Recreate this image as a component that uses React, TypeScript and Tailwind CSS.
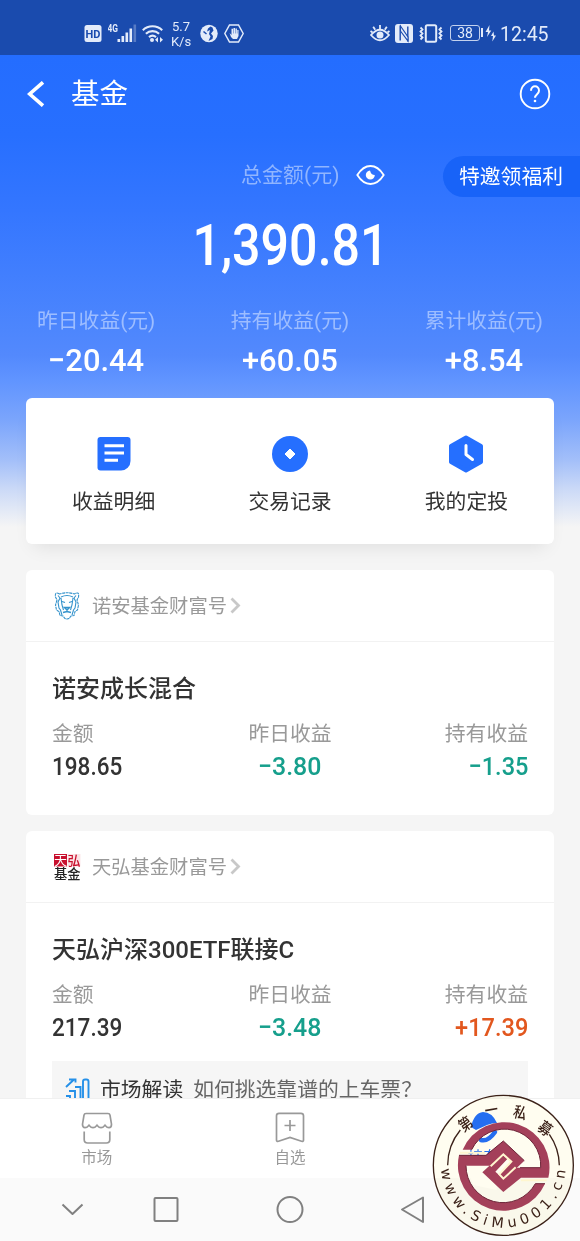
import type { ReactNode } from 'react';

interface Stat {
  label: string;
  value: string;
  tone?: string;
}

interface FundCardProps {
  logo: ReactNode;
  publisher: string;
  name: string;
  stats: Stat[];
  children?: ReactNode;
}

const CJK = "font-['Roboto','Noto_Sans_CJK_SC',sans-serif]";

const summary: Stat[] = [
  { label: '昨日收益(元)', value: '−20.44' },
  { label: '持有收益(元)', value: '+60.05' },
  { label: '累计收益(元)', value: '+8.54' },
];

function StatusBar() {
  return (
    <div className="flex h-[55px] shrink-0 items-end bg-[#1a4bae] pb-[9px] text-[#e3ebfa]">
      <svg className="ml-[84px] mb-[3px]" width="18" height="19" viewBox="0 0 18 19">
        <rect x="0.5" y="1" width="17" height="17" rx="2.5" fill="currentColor" />
        <text x="9" y="13.5" textAnchor="middle" fontSize="11" fontWeight="700" fontFamily="Roboto" fill="#1a4bae">HD</text>
      </svg>
      <svg className="ml-[6px] mb-[3px]" width="29" height="20" viewBox="0 0 29 20">
        <text x="-0.5" y="9" fontSize="10" fontWeight="700" fontFamily="Roboto" textLength="10.5" lengthAdjust="spacingAndGlyphs" fill="currentColor">4G</text>
        <g fill="currentColor">
          <rect x="9.5" y="16" width="2.6" height="3" />
          <rect x="13.5" y="13" width="2.6" height="6" />
          <rect x="17.5" y="9.5" width="2.6" height="9.5" />
          <rect x="21.5" y="5.5" width="2.6" height="13.5" />
          <rect x="25.5" y="1.5" width="2.6" height="17.5" opacity="0.3" />
        </g>
      </svg>
      <svg className="ml-[5px] mb-[3px]" width="22" height="20" viewBox="0 0 22 20">
        <g fill="none" stroke="currentColor" strokeWidth="2.1">
          <path d="M0.8 7.2a14 14 0 0 1 19.4 0" />
          <path d="M3.9 10.8a9.6 9.6 0 0 1 13.2 0" />
          <path d="M7 14.1a5.4 5.4 0 0 1 7 0" />
        </g>
        <circle cx="10" cy="17" r="2" fill="currentColor" />
        <path d="M13 16.8l3-2.7v5.4zM21 16.8l-3-2.7v5.4z" fill="currentColor" />
      </svg>
      <div className="ml-[6px] mb-[-3px] w-[22px] text-center text-[13px] leading-[15px]">
        <div>5.7</div>
        <div>K/s</div>
      </div>
      <svg className="ml-[8px] mb-[3px]" width="18" height="19" viewBox="0 0 18 19">
        <circle cx="9" cy="9.5" r="8.7" fill="currentColor" />
        <path d="M10.500 2.500L8 4.500l-1 3 3-1.500-1 4 1.500 2.500-2 4.500 4-2 .5-3-2-2.500 2.500-3-1-3z" fill="#1a4bae" />
        <path d="M3.500 7.500l3 2.500" stroke="#1a4bae" strokeWidth="1.500" />
      </svg>
      <svg className="ml-[6px] mb-[3px]" width="20" height="19" viewBox="0 0 20 19">
        <path d="M5.500 1h9l4.700 8.500-4.700 8.500h-9L0.800 9.500z" fill="none" stroke="currentColor" strokeWidth="1.500" />
        <path d="M5.500 9l1.500 4 2 2h4l1.500-3V6h-1.200v3.500h-.4V4.600h-1.500v4.900h-.4V4h-1.500v5.500h-.4V4.800H7.500V11z" fill="currentColor" />
      </svg>

      <svg className="ml-[126px] mb-[4px]" width="20" height="18" viewBox="0 0 20 18">
        <g fill="none" stroke="currentColor" strokeWidth="1.800">
          <path d="M1 11q9-10.500 18 0-9 10.500-18 0z" />
          <path d="M10 1v4M3.200 2.800l2 3M16.800 2.800l-2 3M0.500 7l2 1.500M19.500 7l-2 1.500" />
        </g>
        <circle cx="10" cy="11" r="3.500" fill="currentColor" />
      </svg>
      <svg className="ml-[5px] mb-[3px]" width="18" height="19" viewBox="0 0 18 19">
        <rect width="18" height="19" rx="3" fill="currentColor" />
        <path d="M5.200 1.500v15M12.800 2.500v15" stroke="#1a4bae" strokeWidth="1.400" />
        <path d="M5.500 2l7.500 11v4L5.500 7z" fill="currentColor" stroke="#1a4bae" strokeWidth="1.100" />
      </svg>
      <svg className="ml-[6px] mb-[3px]" width="24" height="19" viewBox="0 0 24 19">
        <rect x="6.800" y="1.200" width="10.400" height="16.500" rx="1.500" fill="none" stroke="currentColor" strokeWidth="2" />
        <path d="M1.500 3.500l2 2-2 2 2 2-2 2 2 2-2 2M22.500 3.500l-2 2 2 2-2 2 2 2-2 2 2 2" fill="none" stroke="currentColor" strokeWidth="1.800" />
      </svg>
      <div className="ml-[7px] mb-[5px] h-[16px] w-[30px] rounded-[3px] border border-[#c3d1ee] text-center text-[14px] leading-[14px]">38</div>
      <div className="ml-[1px] mb-[9px] h-[9px] w-[2px] bg-current" />
      <svg className="ml-[2px] mb-[4px]" width="11" height="17" viewBox="0 0 11 17">
        <path d="M4.500 0L0.500 7h2.500l-1 5 4.300-6.500H4zM8.500 6.500L6 11h2l-.7 5.500L11 10.500H9z" fill="currentColor" />
      </svg>
      <div className="ml-[4px] text-[19.500px] leading-[23px]">12:45</div>
    </div>
  );
}

function Header() {
  return (
    <header className="text-white">
      <div className="flex h-[77px] items-center pl-[27px] pr-[29px]">
        <svg width="18" height="26" viewBox="0 0 18 26" fill="none" stroke="currentColor" strokeWidth="3.600">
          <path d="M16 1.300L2.700 13l13.300 11.700" />
        </svg>
        <h1 className="ml-[26px] pt-[3px] text-[28.500px] leading-none">基金</h1>
        <svg className="ml-auto" width="32" height="32" viewBox="0 0 32 32">
          <circle cx="16" cy="16" r="14.300" fill="none" stroke="currentColor" strokeWidth="1.900" />
          <path d="M12 12.800c0-6 8-6 8 0 0 3.300-4 3.400-4 7" fill="none" stroke="currentColor" strokeWidth="2" />
          <circle cx="16" cy="23" r="1.300" fill="currentColor" />
        </svg>
      </div>

      <div className="mt-[24px] flex h-[41px] items-center pl-[241px]">
        <span className="mb-[2px] text-[21px] leading-none text-[#90b5ff]">总金额(元)</span>
        <svg className="ml-auto mb-[3px]" width="29" height="22" viewBox="0 0 29 22">
          <path d="M1.300 11Q7 2 14.500 2T27.700 11Q22 20 14.500 20T1.300 11z" fill="none" stroke="currentColor" strokeWidth="1.800" />
          <path d="M14 6.500a4.500 4.500 0 1 0 4.800 4.500q-3.800 0-4.800-4.500z" fill="currentColor" />
        </svg>
        <div className="ml-[58px] flex h-full w-[137px] items-center rounded-l-full bg-[#1863f8] pt-[2px] pl-4 text-[20.800px]">特邀领福利</div>
      </div>

      <div className="mt-[14px] flex h-[68px] items-center justify-center">
        <span className="scale-x-[0.88] text-[57px] font-medium leading-none">1,390.81</span>
      </div>

      <div className="mt-[27px] flex justify-between px-[37px]">
        {summary.map((s) => (
          <div key={s.label} className="flex flex-col items-center">
            <span className="text-[20.800px] leading-[30px] text-[#9dbdff]">{s.label}</span>
            <span className="mt-[5px] scale-x-[0.98] text-[31.500px] font-medium leading-[40px]">{s.value}</span>
          </div>
        ))}
      </div>
    </header>
  );
}

function QuickLinks() {
  return (
    <div className="mx-[26px] mt-[17px] flex h-[146px] justify-between rounded-md bg-white px-[46px] pt-[36px] text-[20.800px] text-[#333] shadow-[0_10px_18px_-8px_rgba(0,0,0,0.1)]">
      <div className="flex flex-col items-center">
        <svg width="40" height="40" viewBox="0 0 40 40">
          <path d="M6.500 3h27a3 3 0 0 1 3 3v21a9.500 9.500 0 0 1-9.500 9.500H6.500a3 3 0 0 1-3-3V6a3 3 0 0 1 3-3z" fill="#256fff" />
          <path d="M10.500 11.800h19.500M10.500 19h19.500M10.500 26.200h13.500" stroke="#fff" strokeWidth="3" />
        </svg>
        <span className="mt-[11px] leading-[34px]">收益明细</span>
      </div>
      <div className="flex flex-col items-center">
        <svg width="40" height="40" viewBox="0 0 40 40">
          <circle cx="20" cy="20" r="18" fill="#256fff" />
          <path d="M20 15l5 5-5 5-5-5z" fill="#fff" stroke="#fff" strokeLinejoin="round" />
        </svg>
        <span className="mt-[11px] leading-[34px]">交易记录</span>
      </div>
      <div className="flex flex-col items-center">
        <svg width="40" height="40" viewBox="0 0 40 40">
          <path d="M20 3.500l15 8.500v16l-15 8.500-15-8.500V12z" fill="#256fff" stroke="#256fff" strokeWidth="4" strokeLinejoin="round" />
          <path d="M20 11.500V20.500l6.500 5" fill="none" stroke="#fff" strokeWidth="3" strokeLinecap="round" strokeLinejoin="round" />
        </svg>
        <span className="mt-[11px] leading-[34px]">我的定投</span>
      </div>
    </div>
  );
}

function LionLogo() {
  return (
    <svg width="28" height="30" viewBox="0 0 28 30" fill="none" stroke="#3593cc" strokeWidth="1.100">
      <path d="M6.500 3Q1.500 0 2.500 6l1.500 3-1.500 5 1 5 2.500 1.500 1 4 3 .5 2 2.500 2 .5 2-.5 2-2.500 3-.5 1-4 2.500-1.500 1-5L24 9l1.500-3q1-6-4-3-7.500-2.500-15 0z" strokeDasharray="3 .6" />
      <path d="M5 4.500l2 2.500-2 4 1 6 1.500 2 1.500 5M23 4.500l-2 2.500 2 4-1 6-1.500 2-1.500 5M8 6q6-3 12 0M8 7l1 7 1.500 5M20 7l-1 7-1.500 5" />
      <path d="M9 10.500l3 1M19 10.500l-3 1" strokeWidth="1.300" />
      <path d="M11.500 16.500h5l-2.500 2.500zM14 18.500v2.500M10 21.500l4-1 4 1" strokeWidth="1.500" />
    </svg>
  );
}

function TianhongLogo() {
  return (
    <svg className="overflow-visible" width="28" height="28" viewBox="0 0 28 28" fontSize="13" fontFamily="Noto Sans CJK SC">
      <rect x="1" y="1" width="13" height="12.500" fill="#c8102e" />
      <rect x="14.600" y="1" width="12.800" height="12.500" fill="#fbe3e5" />
      <text x="1" y="12.200" fill="#fff">天</text>
      <text x="14.400" y="12.200" fill="#c8102e" fontWeight="500">弘</text>
      <text x="1" y="26" fill="#222" fontSize="13.300" fontWeight="500">基金</text>
    </svg>
  );
}

const columns = [
  { cell: 'items-start', value: 'origin-left scale-x-[0.85]' },
  { cell: 'items-center', value: 'scale-x-[0.94]' },
  { cell: 'items-end', value: 'origin-right scale-x-[0.89]' },
];

function FundCard({ logo, publisher, name, stats, children }: FundCardProps) {
  return (
    <section className="mx-[26px] rounded-md bg-white">
      <div className="flex h-[72px] items-center border-b border-[#f2f2f2] pl-[27px]">
        {logo}
        <span className="ml-[11px] pt-[2px] text-[19.300px] leading-none text-[#999]">{publisher}</span>
        <svg className="ml-[3px]" width="11" height="17" viewBox="0 0 11 17" fill="none" stroke="#c8c8c8" strokeWidth="2.800">
          <path d="M1.500 1.500l7 7-7 7" />
        </svg>
      </div>
      <div className="px-[26px] pt-[29px]">
        <h2 className="text-[24px] font-medium leading-[36px] text-[#333]">{name}</h2>
        <div className="mt-[12px] grid grid-cols-3">
          {stats.map((s, i) => (
            <div key={s.label} className={`flex flex-col ${columns[i].cell}`}>
              <span className="text-[20.800px] leading-[30px] text-[#999]">{s.label}</span>
              <span className={`text-[26.500px] font-medium leading-[34px] ${columns[i].value} ${s.tone ?? 'text-[#333]'}`}>
                {s.value}
              </span>
            </div>
          ))}
        </div>
        {children}
      </div>
    </section>
  );
}

function TabBar() {
  return (
    <div className="grid h-[80px] shrink-0 grid-cols-3 border-t border-[#f0f0f0] bg-white text-[15.500px] text-[#999]">
      <div className="flex flex-col items-center pt-[12px]">
        <svg width="32" height="34" viewBox="0 0 32 34" fill="none" stroke="currentColor" strokeWidth="1.700">
          <path d="M5 2.500h22q1.700 0 2 1.700l1.500 9q0 3.500-2.500 3.500-2 0-4-2.500-2 2.500-4 2.500t-4-2.500q-2 2.500-4 2.500t-4-2.500q-2 2.500-4 2.500-2.500 0-2.500-3.500L3 4.200q.3-1.700 2-1.700z" />
          <path d="M3.200 20.500v8q0 3.500 3.500 3.500h18.600q3.500 0 3.500-3.500v-8" />
        </svg>
        <span className="leading-[26px]">市场</span>
      </div>
      <div className="flex flex-col items-center pt-[12px]">
        <svg width="32" height="34" viewBox="0 0 32 34" fill="none" stroke="currentColor" strokeWidth="1.700">
          <path d="M5 2.300h22q2.500 0 2.500 2.500v24.500q0 1.500-2 1L16 26.500 4.500 30.300q-2 .5-2-1V4.800q0-2.500 2.500-2.500z" />
          <path d="M10.500 14.500h11M16 9v11" />
        </svg>
        <span className="leading-[26px]">自选</span>
      </div>
      <div className="flex flex-col items-center pt-[12px] text-[#256fff]">
        <svg width="32" height="34" viewBox="0 0 32 34">
          <path d="M4 16Q7 2 16 1q9 0 14 11-5 0-10 2L9 19z" fill="currentColor" />
          <path d="M14 29q7 2 14-8" fill="none" stroke="currentColor" strokeWidth="4.500" strokeLinecap="round" />
        </svg>
        <span className="leading-[26px]">持有</span>
      </div>
    </div>
  );
}

function SystemNav() {
  return (
    <div className="flex h-[63px] shrink-0 items-center bg-[#fafafa] pl-[61px]">
      <svg width="380" height="30" viewBox="0 0 380 30" fill="none" stroke="#808080" strokeWidth="2" strokeLinejoin="round">
        <path d="M1.500 9.500l10 9.500 10-9.500" />
        <rect x="93.500" y="3" width="23" height="23" rx="1" />
        <circle cx="229" cy="14.500" r="12.500" />
        <path d="M362 2.500v24.500L341 14.500z" />
      </svg>
    </div>
  );
}

// Round stamp that floats over the bottom right corner, tinting the tab below it
function Stamp() {
  return (
    <>
      <div className="absolute bottom-[6px] right-[7px] size-[140px] rounded-full bg-[#fffdf0] mix-blend-multiply" />
      <svg className="absolute bottom-0 right-0" width="160" height="156" viewBox="0 0 480 468">
        <defs>
          <path id="stamp-url" d="M63 241a187 187 0 0 0 374 0" />
        </defs>
        <circle cx="250" cy="241" r="210" fill="none" stroke="#3b2118" strokeWidth="4" />
        <path d="M83 241a167 167 0 0 1 38-106M388 148a167 167 0 0 1 30 93" fill="none" stroke="#3b2118" strokeWidth="4" />
        <path d="M138 243H230V315L160 300z" fill="#fffdf0" />
        <g fill="#a4405a">
          <path d="M128 194A135.700 135.700 0 0 1 385 278H303L250 321 187 262 246 208 262 222 226 260 250 281 287 248H362A109 109 0 0 0 155 194z" />
          <path d="M375 296A136.500 136.500 0 0 1 117 211H198L250 168 313 227 255 282 239 268 274 230 250 208 212 242H138A111 111 0 0 0 346 296z" />
        </g>
        <g fill="none" stroke="#fff6cf" strokeWidth="6" strokeLinejoin="miter">
          <path d="M120 203H195M303 286H380" />
          <path d="M212 244L250 208 274 230 238 268 250 281 287 247" />
        </g>
        <g fill="none" stroke="#6d2438" strokeWidth="3">
          <path d="M155 194A109 109 0 0 1 362 248H300M138 242A111 111 0 0 0 346 296H375" />
          <path d="M117 211H198L250 168 313 227" />
        </g>
        <g fill="#3b2118" fontSize="47" fontWeight="500" fontFamily="Noto Sans CJK SC" textAnchor="middle">
          <text transform="translate(137 117) rotate(-36) scale(.85 1)" y="17">第</text>
          <text transform="translate(214 75) rotate(-10) scale(.85 1)" y="17">一</text>
          <text transform="translate(300 83) rotate(14) scale(.85 1)" y="17">私</text>
          <text transform="translate(376 131) rotate(36) scale(.85 1)" y="17">募</text>
        </g>
        <text fontSize="43" fontFamily="DejaVu Sans" fill="#3b2118">
          <textPath href="#stamp-url" startOffset="12" textLength="560">www.SiMu001.cn</textPath>
        </text>
      </svg>
    </>
  );
}

export default function App() {
  return (
    <div className={`relative flex h-[1241px] w-[580px] flex-col overflow-hidden bg-[#f5f5f5] ${CJK}`}>
      <StatusBar />
      <main className="min-h-0 flex-1 overflow-hidden bg-[linear-gradient(180deg,#246dff_0px,#276fff_80px,#3476ff_155px,#4d86fd_275px,#5389fd_300px,#6094ff_325px,#7ba5fc_365px,#a3bff9_405px,#ccdaf7_435px,#f5f5f5_472px)]">
        <Header />
        <QuickLinks />
        <div className="mt-[26px] space-y-[16px]">
          <FundCard
            logo={<LionLogo />}
            publisher="诺安基金财富号"
            name="诺安成长混合"
            stats={[
              { label: '金额', value: '198.65' },
              { label: '昨日收益', value: '−3.80', tone: 'text-[#169f8c]' },
              { label: '持有收益', value: '−1.35', tone: 'text-[#169f8c]' },
            ]}
          >
            <div className="h-[32px]" />
          </FundCard>
          <FundCard
            logo={<TianhongLogo />}
            publisher="天弘基金财富号"
            name="天弘沪深300ETF联接C"
            stats={[
              { label: '金额', value: '217.39' },
              { label: '昨日收益', value: '−3.48', tone: 'text-[#169f8c]' },
              { label: '持有收益', value: '+17.39', tone: 'text-[#e2571e]' },
            ]}
          >
            <div className="mt-[17px] flex h-[56px] items-center bg-[#f6f6f6] pt-[3px] pl-[13px] text-[20.800px]">
              <svg className="mb-[3px]" width="26" height="24" viewBox="0 0 26 24" fill="none" stroke="#2590e8" strokeWidth="1.900">
                <path d="M1 10l8-7.500M4 2.500h6.500v3M4 14h6v10M1 19h4v5M10 10h5.500v14M15.500 10V24M18 24V4.500q0-2 2-2h1.500q2 0 2 2V24" />
              </svg>
              <span className="ml-[9px] text-[#333]">市场解读</span>
              <span className="ml-[10px] text-[#666]">如何挑选靠谱的上车票？</span>
            </div>
          </FundCard>
        </div>
      </main>
      <TabBar />
      <SystemNav />
      <Stamp />
    </div>
  );
}
